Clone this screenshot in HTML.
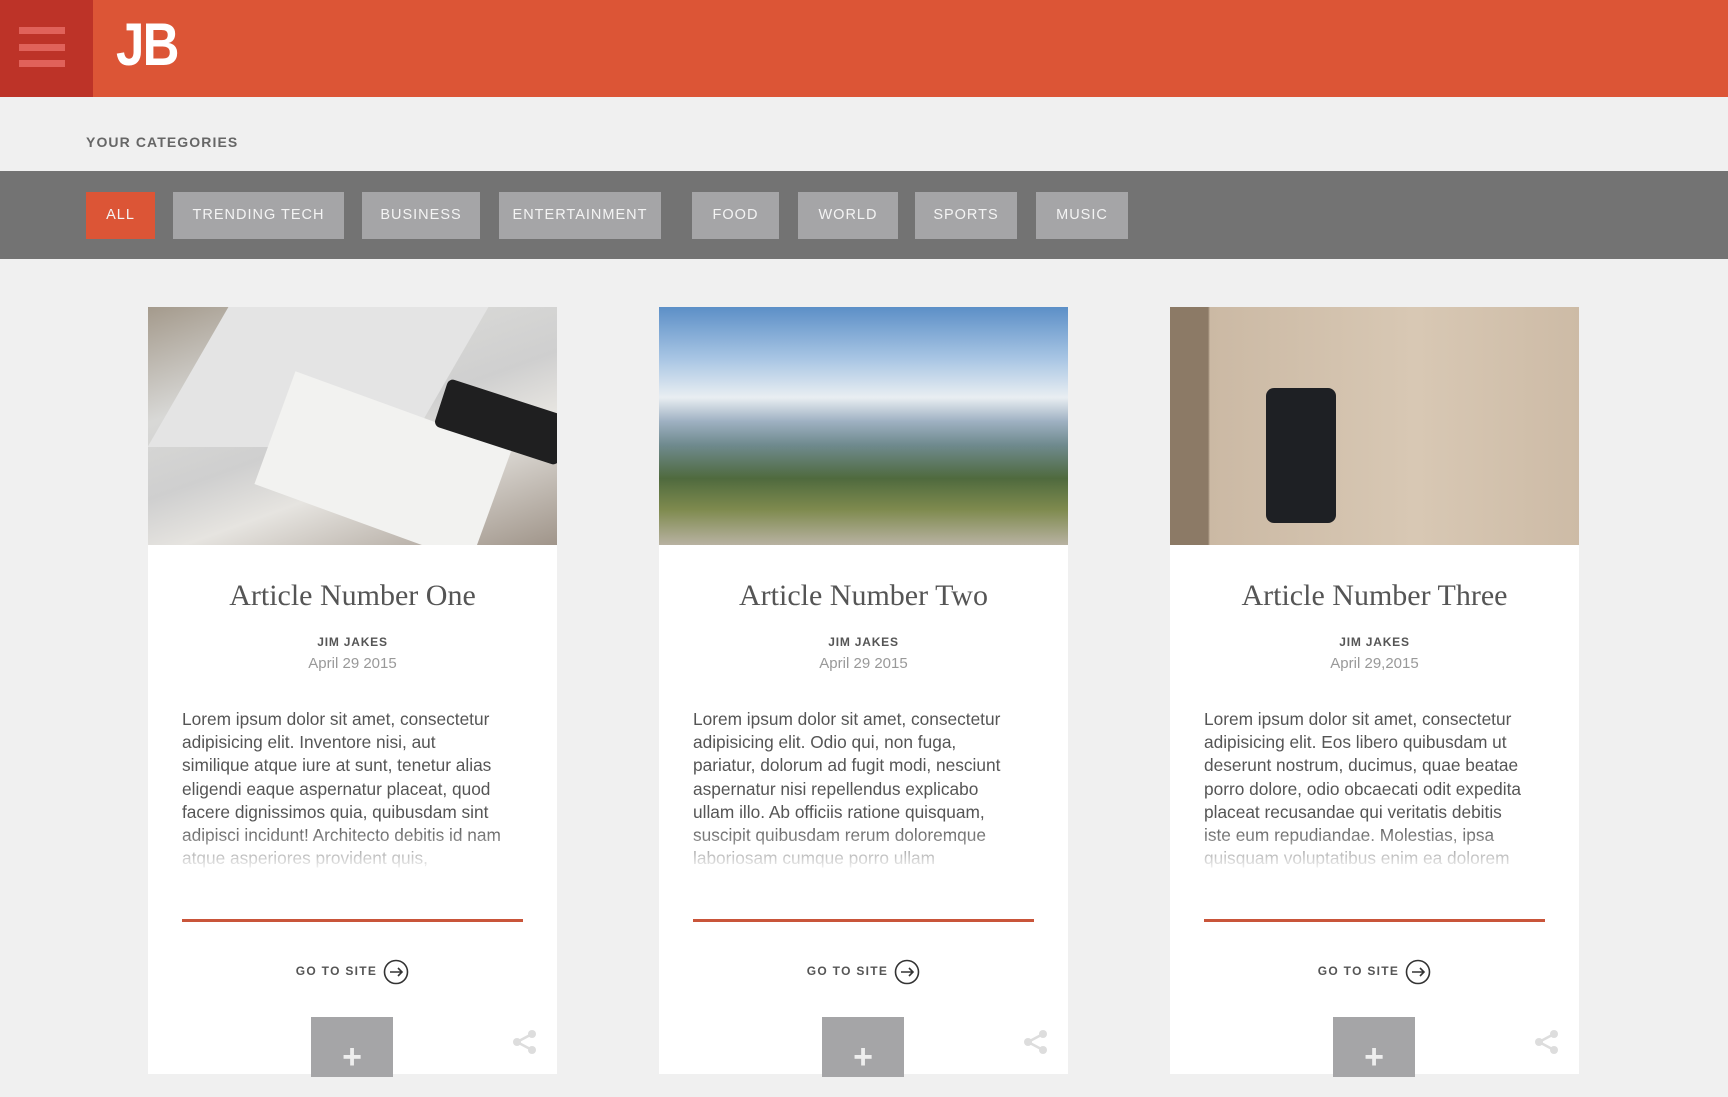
<!DOCTYPE html>
<html><head><meta charset="utf-8"><style>
*{margin:0;padding:0;box-sizing:border-box}
body{width:1728px;height:1080px;overflow:hidden;background:#f0f0f0;font-family:"Liberation Sans",sans-serif;position:relative}
.hdr{position:absolute;left:0;top:0;width:1728px;height:97px;background:#dc5536}
.ham{position:absolute;left:0;top:0;width:93px;height:97px;background:#bd3328}
.ham i{position:absolute;left:19px;width:46px;height:7px;background:#e0625a}
.logo{position:absolute;left:116px;top:10px;color:#fff;font:bold 60px "Liberation Sans",sans-serif;letter-spacing:-4px;transform:scaleX(.85);transform-origin:left top}
.cat{position:absolute;left:86px;top:134px;font-size:14px;font-weight:bold;color:#666;letter-spacing:1.1px}
.bar{position:absolute;left:0;top:171px;width:1728px;height:88px;background:#737373}
.btn{position:absolute;top:21px;height:47px;background:#a5a5a7;color:#f4f4f4;font-size:14.5px;letter-spacing:1px;line-height:47px;text-align:center;white-space:nowrap}
.card{position:absolute;top:307px;width:409px;height:767px;background:#fff}
.img{height:238px;position:relative;overflow:hidden}
.t{position:absolute;top:272px;width:100%;text-align:center;font:30px "Liberation Serif",serif;color:#555}
.a{position:absolute;top:328px;width:100%;text-align:center;font-size:12px;font-weight:bold;color:#555;letter-spacing:.8px}
.d{position:absolute;top:348px;width:100%;text-align:center;font-size:15px;color:#999}
.b{position:absolute;left:34px;top:401px;width:360px;height:172px;overflow:hidden;white-space:nowrap;font-size:17.3px;line-height:23.2px;color:#555;-webkit-mask-image:linear-gradient(#000 68%,rgba(0,0,0,.6) 80%,transparent 95%);mask-image:linear-gradient(#000 68%,rgba(0,0,0,.6) 80%,transparent 95%)}
.ln{position:absolute;left:34px;top:612px;width:341px;height:3px;background:#c9553a}
.g{position:absolute;top:652px;width:100%;text-align:center;font-size:12px;font-weight:bold;color:#555;letter-spacing:1.3px}
.g svg{vertical-align:middle;margin-left:6px}
.plus{position:absolute;left:163px;top:710px;width:82px;height:60px;background:#a5a5a7;color:#eee;font:bold 34px "Liberation Sans";text-align:center;line-height:80px}
.sh{position:absolute;left:364px;top:722px}
</style></head><body>
<div class="hdr"><div class="ham"><i style="top:27px"></i><i style="top:44px"></i><i style="top:60px"></i></div><div class="logo">J<span style="margin-left:2px">B</span></div></div>
<div class="cat">YOUR CATEGORIES</div>
<div class="bar">
<div class="btn" style="left:86px;width:69px;background:#dc5536">ALL</div>
<div class="btn" style="left:173px;width:171px">TRENDING TECH</div>
<div class="btn" style="left:362px;width:118px">BUSINESS</div>
<div class="btn" style="left:499px;width:162px">ENTERTAINMENT</div>
<div class="btn" style="left:692px;width:87px">FOOD</div>
<div class="btn" style="left:798px;width:100px">WORLD</div>
<div class="btn" style="left:915px;width:102px">SPORTS</div>
<div class="btn" style="left:1036px;width:92px">MUSIC</div>
</div>

<div class="card" style="left:148px">
<div class="img" style="background:linear-gradient(160deg,#a49a8c 0%,#d8d8d6 30%,#cfcfcf 50%,#e6e4e0 65%,#a0958a 100%)">
<div style="position:absolute;left:0;top:0;width:260px;height:140px;background:#e4e4e4;transform:skewX(-30deg);left:40px"></div>
<div style="position:absolute;left:120px;top:100px;width:230px;height:120px;background:#f2f2f0;transform:rotate(20deg)"></div>
<div style="position:absolute;left:290px;top:90px;width:130px;height:50px;background:#1f1f20;transform:rotate(18deg);border-radius:6px"></div>
</div>
<div class="t">Article Number One</div><div class="a">JIM JAKES</div><div class="d">April 29 2015</div>
<div class="b">Lorem ipsum dolor sit amet, consectetur<br>adipisicing elit. Inventore nisi, aut<br>similique atque iure at sunt, tenetur alias<br>eligendi eaque aspernatur placeat, quod<br>facere dignissimos quia, quibusdam sint<br>adipisci incidunt! Architecto debitis id nam<br>atque asperiores provident quis,<br>consequatur laboriosam dolor.</div>
<div class="ln"></div>
<div class="g">GO TO SITE<svg width="26" height="26" viewBox="0 0 26 26"><circle cx="13" cy="13" r="11.5" fill="none" stroke="#333" stroke-width="1.6"/><path d="M7 13h12M15 9l4 4-4 4" fill="none" stroke="#333" stroke-width="1.6"/></svg></div>
<div class="plus">+</div>
<svg class="sh" width="26" height="26" viewBox="0 0 26 26"><g fill="#ddd"><circle cx="20" cy="5" r="4"/><circle cx="5" cy="13" r="4"/><circle cx="20" cy="21" r="4"/></g><path d="M20 5L5 13l15 8" stroke="#ddd" stroke-width="2.5" fill="none"/></svg>
</div>

<div class="card" style="left:659px">
<div class="img" style="background:linear-gradient(180deg,#5c8fc7 0%,#a9c6e4 22%,#e9eef2 38%,#9fb1c2 48%,#6f8a8e 58%,#4f6a3e 72%,#7e8a4e 85%,#b8b2a2 100%)"></div>
<div class="t">Article Number Two</div><div class="a">JIM JAKES</div><div class="d">April 29 2015</div>
<div class="b">Lorem ipsum dolor sit amet, consectetur<br>adipisicing elit. Odio qui, non fuga,<br>pariatur, dolorum ad fugit modi, nesciunt<br>aspernatur nisi repellendus explicabo<br>ullam illo. Ab officiis ratione quisquam,<br>suscipit quibusdam rerum doloremque<br>laboriosam cumque porro ullam<br>molestias dolor sit amet.</div>
<div class="ln"></div>
<div class="g">GO TO SITE<svg width="26" height="26" viewBox="0 0 26 26"><circle cx="13" cy="13" r="11.5" fill="none" stroke="#333" stroke-width="1.6"/><path d="M7 13h12M15 9l4 4-4 4" fill="none" stroke="#333" stroke-width="1.6"/></svg></div>
<div class="plus">+</div>
<svg class="sh" width="26" height="26" viewBox="0 0 26 26"><g fill="#ddd"><circle cx="20" cy="5" r="4"/><circle cx="5" cy="13" r="4"/><circle cx="20" cy="21" r="4"/></g><path d="M20 5L5 13l15 8" stroke="#ddd" stroke-width="2.5" fill="none"/></svg>
</div>

<div class="card" style="left:1170px">
<div class="img" style="background:linear-gradient(90deg,#8c7a66 0,#8c7a66 38px,#cbb9a4 40px,#d8c8b4 60%,#cdbba6 100%)"><div style="position:absolute;left:96px;top:81px;width:70px;height:135px;background:#1e2024;border-radius:8px"></div></div>
<div class="t">Article Number Three</div><div class="a">JIM JAKES</div><div class="d">April 29,2015</div>
<div class="b">Lorem ipsum dolor sit amet, consectetur<br>adipisicing elit. Eos libero quibusdam ut<br>deserunt nostrum, ducimus, quae beatae<br>porro dolore, odio obcaecati odit expedita<br>placeat recusandae qui veritatis debitis<br>iste eum repudiandae. Molestias, ipsa<br>quisquam voluptatibus enim ea dolorem<br>perferendis nihil.</div>
<div class="ln"></div>
<div class="g">GO TO SITE<svg width="26" height="26" viewBox="0 0 26 26"><circle cx="13" cy="13" r="11.5" fill="none" stroke="#333" stroke-width="1.6"/><path d="M7 13h12M15 9l4 4-4 4" fill="none" stroke="#333" stroke-width="1.6"/></svg></div>
<div class="plus">+</div>
<svg class="sh" width="26" height="26" viewBox="0 0 26 26"><g fill="#ddd"><circle cx="20" cy="5" r="4"/><circle cx="5" cy="13" r="4"/><circle cx="20" cy="21" r="4"/></g><path d="M20 5L5 13l15 8" stroke="#ddd" stroke-width="2.5" fill="none"/></svg>
</div>
</body></html>
